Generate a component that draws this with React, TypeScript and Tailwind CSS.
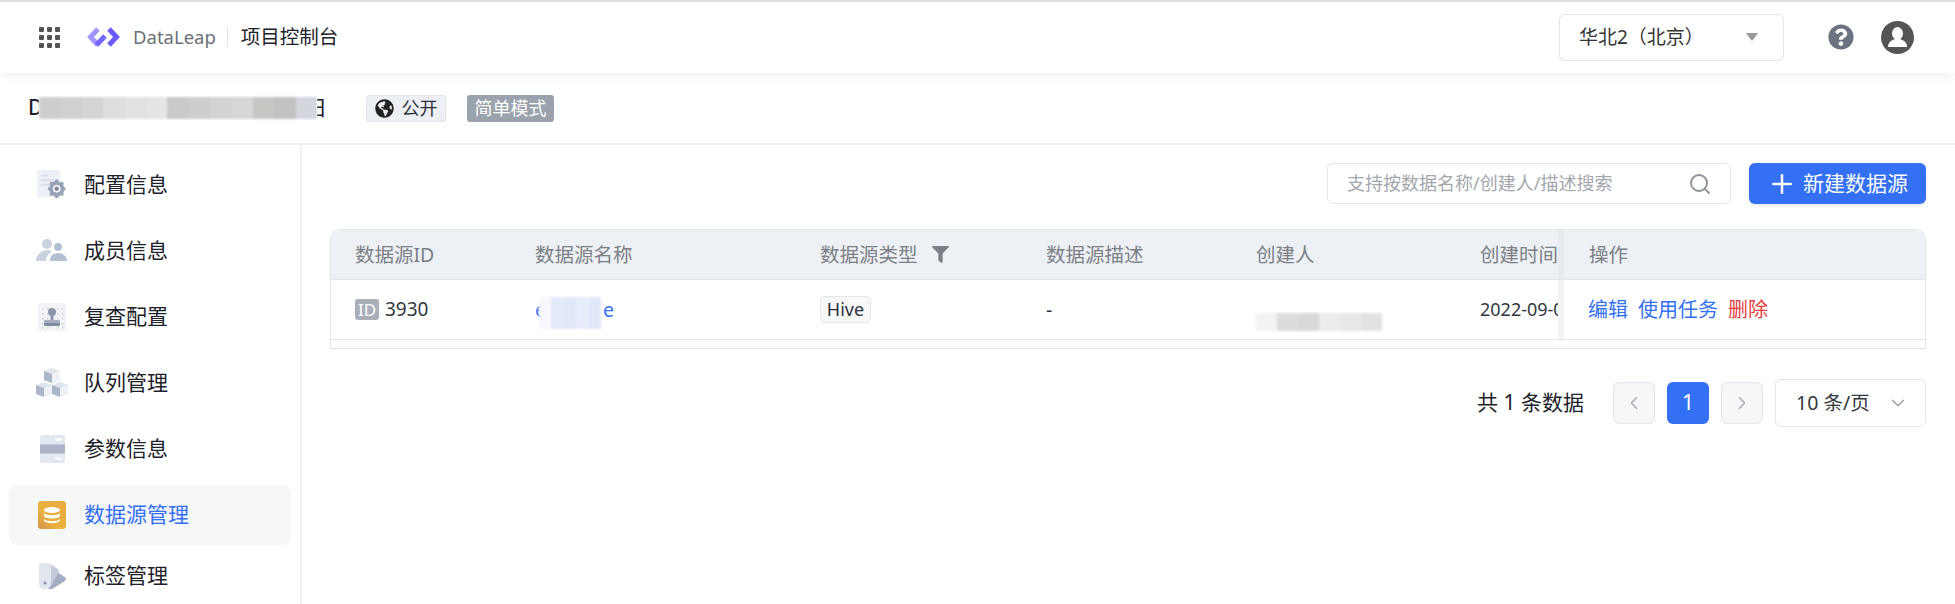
import type { ReactNode } from 'react'
import { ChevronDown, ChevronLeft, ChevronRight, Plus, Search } from 'lucide-react'
import { FaFilter, FaGlobeAmericas, FaQuestionCircle } from 'react-icons/fa'

const Logo = () => (
  <svg width="33" height="22" viewBox="0 0 33 22" fill="none" strokeWidth="5">
    <path d="M11 3 L3.5 11 L11 19" stroke="#a196ff" />
    <path d="M9.5 19 L18 10" stroke="#7466ff" />
    <path d="M22 3 L29.5 11 L22 19" stroke="#6a5bff" />
  </svg>
)

const GridDots = () => (
  <div className="grid w-[21px] grid-cols-3 gap-[3px]">
    {Array.from({ length: 9 }).map((_, i) => (
      <span key={i} className="h-[5px] w-[5px] rounded-[1px] bg-[#555]" />
    ))}
  </div>
)

const ConfigIcon = () => (
  <svg width="34" height="32" viewBox="0 0 34 32">
    <rect x="1" y="0" width="25" height="29" rx="2" fill="#edf0f6" />
    <rect x="5" y="5" width="8" height="2" fill="#d9dee8" />
    <rect x="5" y="10" width="14" height="2" fill="#d9dee8" />
    <rect x="5" y="15" width="10" height="2" fill="#d9dee8" />
    <circle cx="22" cy="20" r="8" fill="#98a3b7" />
    <circle cx="22" cy="12" r="2" fill="#98a3b7" />
    <circle cx="22" cy="28" r="2" fill="#98a3b7" />
    <circle cx="14.5" cy="20" r="2" fill="#98a3b7" />
    <circle cx="29.5" cy="20" r="2" fill="#98a3b7" />
    <circle cx="16.5" cy="14.5" r="2" fill="#98a3b7" />
    <circle cx="27.5" cy="14.5" r="2" fill="#98a3b7" />
    <circle cx="16.5" cy="25.5" r="2" fill="#98a3b7" />
    <circle cx="27.5" cy="25.5" r="2" fill="#98a3b7" />
    <circle cx="22" cy="20" r="4" fill="#fff" />
    <circle cx="22" cy="20" r="2.4" fill="#7d889c" />
  </svg>
)

const MemberIcon = () => (
  <svg width="32" height="24" viewBox="0 0 32 24">
    <circle cx="11" cy="5" r="5" fill="#c9d2df" />
    <path d="M0 22 C0 15 6 11 12 11 C14 11 15 12 16 13 C12 15 10 18 10 22 Z" fill="#c9d2df" />
    <circle cx="22" cy="8" r="4" fill="#b3c0d3" />
    <path d="M14 22 C14 16 18 14 22 14 C27 14 31 17 31 22 Z" fill="#b3c0d3" />
  </svg>
)

const ReviewIcon = () => (
  <svg width="28" height="28" viewBox="0 0 28 28">
    <rect width="28" height="28" rx="2" fill="#f2f4f8" />
    {[4, 9, 19, 24].map(x =>
      [5, 10, 15, 20, 24].map(y => <rect key={`${x}-${y}`} x={x} y={y} width="1.5" height="1.5" fill="#c5ccd9" />)
    )}
    <circle cx="14" cy="9" r="4" fill="#8a96aa" />
    <rect x="12.5" y="12" width="3" height="5" fill="#8a96aa" />
    <rect x="6" y="17" width="16" height="4" rx="1" fill="#a5afc0" />
    <rect x="6" y="20" width="16" height="3" rx="1" fill="#7f8ba0" />
  </svg>
)

const QueueIcon = () => (
  <svg width="32" height="30" viewBox="0 0 32 30">
    <path d="M16 0 L24 3 V12 L16 15 L8 12 V3 Z" fill="#dfe4ee" />
    <path d="M16 6 L24 3 V12 L16 15 Z" fill="#eef1f6" />
    <path d="M8 3 L16 6 V15 L8 12 Z" fill="#aab6c9" />
    <path d="M8 14 L16 17 V26 L8 29 L0 26 V17 Z" fill="#dfe4ee" />
    <path d="M0 17 L8 20 V29 L0 26 Z" fill="#aab6c9" />
    <path d="M8 20 L16 17 V26 L8 29 Z" fill="#eef1f6" />
    <path d="M24 14 L32 17 V26 L24 29 L16 26 V17 Z" fill="#dfe4ee" />
    <path d="M16 17 L24 20 V29 L16 26 Z" fill="#aab6c9" />
    <path d="M24 20 L32 17 V26 L24 29 Z" fill="#eef1f6" />
  </svg>
)

const ParamIcon = () => (
  <svg width="25" height="28" viewBox="0 0 25 28">
    <rect width="25" height="28" rx="2" fill="#e2e7f0" />
    <rect y="9.5" width="25" height="9" fill="#aab4c6" />
    <rect x="15" y="3.5" width="7" height="2" fill="#fff" />
    <rect x="15" y="22.5" width="7" height="2" fill="#fff" />
  </svg>
)

const DatabaseIcon = () => (
  <svg width="28" height="28" viewBox="0 0 28 28">
    <defs>
      <linearGradient id="db" x1="0" y1="1" x2="1" y2="0">
        <stop offset="0" stopColor="#d3924a" />
        <stop offset="0.4" stopColor="#ebb23e" />
        <stop offset="1" stopColor="#e8a93f" />
      </linearGradient>
    </defs>
    <rect width="28" height="28" rx="3" fill="url(#db)" />
    <ellipse cx="14" cy="9" rx="8" ry="3" fill="#fff" />
    <path d="M6 12 C8 15 20 15 22 12 V15.5 C20 18 8 18 6 15.5 Z" fill="#fff" />
    <path d="M6 18 C8 21 20 21 22 18 V19.5 C20 23 8 23 6 19.5 Z" fill="#fff" />
  </svg>
)

const TagIcon = () => (
  <svg width="27" height="26" viewBox="0 0 27 26">
    <path d="M11 4 L27 15 L26 18 L13 26 L9 26 Z" fill="#a3adc6" />
    <path d="M11 1 L19 6 L20 9 L11 24 Z" fill="#c3cadc" />
    <path d="M0 2 C0 1 1 0 2 0 H10 C11 0 12 1 12 2 V20 C12 24 10 26 6 26 C2 26 0 24 0 20 Z" fill="#e2e6ef" />
    <circle cx="6" cy="20" r="1.6" fill="#8f99ad" />
  </svg>
)

const Avatar = () => (
  <svg width="33" height="33" viewBox="0 0 33 33">
    <defs>
      <clipPath id="av">
        <circle cx="16.5" cy="16.5" r="16.5" />
      </clipPath>
    </defs>
    <circle cx="16.5" cy="16.5" r="16.5" fill="#555" />
    <g clipPath="url(#av)">
      <ellipse cx="16.5" cy="12.5" rx="5.5" ry="6.5" fill="#fff" />
      <path d="M7 26 C7 21 11 19 14 18 H19 C22 19 26 21 26 26 Z" fill="#fff" />
    </g>
  </svg>
)

const MENU: { label: string; icon: ReactNode; active?: boolean; className: string }[] = [
  { label: '配置信息', icon: <ConfigIcon />, className: 'mb-[6px]' },
  { label: '成员信息', icon: <MemberIcon />, className: 'mb-[6px]' },
  { label: '复查配置', icon: <ReviewIcon />, className: 'mb-[6px]' },
  { label: '队列管理', icon: <QueueIcon />, className: 'mb-[6px]' },
  { label: '参数信息', icon: <ParamIcon />, className: 'mb-[6px]' },
  { label: '数据源管理', icon: <DatabaseIcon />, active: true, className: 'mb-[1px]' },
  { label: '标签管理', icon: <TagIcon />, className: '' },
]

const Mosaic = ({ colors, className }: { colors: string[]; className: string }) => (
  <div className={`flex overflow-hidden blur-[1px] ${className}`}>
    {colors.map((c, i) => (
      <span key={i} className="h-full flex-1" style={{ backgroundColor: c }} />
    ))}
  </div>
)

const Header = () => (
  <header className="relative z-10 flex h-[73px] shrink-0 items-center border-t-2 border-[#dedede] bg-white pr-[41px] pb-[1px] pl-[39px] shadow-[0_3px_10px_rgba(0,0,0,0.06)]">
    <GridDots />
    <div className="ml-[27px]">
      <Logo />
    </div>
    <span className="ml-[13px] text-[18.5px] text-[#6b6f76]">DataLeap</span>
    <span className="ml-[11px] h-[20px] w-px bg-[#e2e2e2]" />
    <span className="ml-[13px] text-[19.5px] text-[#1d2129]">项目控制台</span>
    <div className="ml-auto flex h-[47px] w-[225px] items-center justify-between rounded-[6px] border border-[#e3e3e3] pr-[25px] pl-[19px] text-[19px] text-[#333]">
      <span>华北2（北京）</span>
      <span className="h-0 w-0 border-x-[6px] border-t-[8px] border-x-transparent border-t-[#999]" />
    </div>
    <FaQuestionCircle className="ml-[44px] text-[#6b7280]" size={26} />
    <div className="ml-[27px]">
      <Avatar />
    </div>
  </header>
)

const TitleBar = () => (
  <div className="flex h-[72px] shrink-0 items-center border-b-2 border-[#f0f1f3] pl-[28px]">
    <span className="w-[11px] overflow-hidden text-[21px] font-medium text-[#1d2129]">D</span>
    <Mosaic
      className="h-[22px] w-[278px]"
      colors={['#cfcdcb', '#d2d0ce', '#d5d4d2', '#dedede', '#e2e2e2', '#e4e4e4', '#cbcac8', '#cecdcb', '#d4d3d1', '#d8d7d6', '#c8c6c3', '#c4c2c0', '#d3d6dc']}
    />
    <span className="w-[10px] overflow-hidden text-[21px] text-[#1d2129] [direction:rtl]">日</span>
    <div className="ml-[39px] flex h-[27px] w-[80px] items-center justify-center gap-[8px] rounded-[3px] border border-[#dfe3ea] bg-[#eceff4] text-[18px] text-[#2b2f36]">
      <FaGlobeAmericas size={19} className="text-[#222]" />
      <span>公开</span>
    </div>
    <div className="ml-[21px] flex h-[27px] w-[87px] items-center justify-center rounded-[3px] bg-[#9aa2ad] text-[18px] text-white">
      简单模式
    </div>
  </div>
)

const Sidebar = () => (
  <aside className="w-[302px] shrink-0 border-r-2 border-[#f0f1f3] px-[9px] pt-[10px]">
    {MENU.map(item => (
      <div
        key={item.label}
        className={`flex h-[60px] items-center rounded-[8px] pl-[27px] ${item.className} ${item.active ? 'bg-[#f6f7f9] text-[#3370f4]' : 'text-[#1d2129]'}`}
      >
        <span className="flex w-[32px] justify-center">{item.icon}</span>
        <span className="ml-[16px] text-[21px]">{item.label}</span>
      </div>
    ))}
  </aside>
)

const Toolbar = () => (
  <div className="flex justify-end gap-[18px]">
    <div className="flex h-[41px] w-[404px] items-center justify-between rounded-[6px] border border-[#e3e5ea] pr-[18px] pl-[19px]">
      <span className="text-[18px] text-[#a3a6ad]">支持按数据名称/创建人/描述搜索</span>
      <Search size={24} strokeWidth={2} className="text-[#8f939a]" />
    </div>
    <button className="flex h-[41px] w-[177px] items-center justify-center gap-[6px] rounded-[6px] bg-[#3370f4] text-[21px] text-white shadow-[0_2px_3px_rgba(0,0,0,0.08)]">
      <Plus size={30} strokeWidth={2} />
      <span>新建数据源</span>
    </button>
  </div>
)

const TH = 'flex h-full shrink-0 items-center text-[19.5px] text-[#7b7f86]'
const TD = 'flex h-full shrink-0 items-center text-[#333840]'

const DataTable = () => (
  <div className="mt-[25px] h-[120px] overflow-hidden rounded-t-[10px] border border-[#e3e5ea] bg-white">
    <div className="flex h-[50px] border-b border-[#e3e5ea] bg-[#edf0f5]">
      <div className="flex min-w-0 flex-1 overflow-hidden pl-[24px]">
        <div className={`${TH} w-[180px]`}>数据源ID</div>
        <div className={`${TH} w-[285px]`}>数据源名称</div>
        <div className={`${TH} w-[226px]`}>
          数据源类型
          <FaFilter size={17} className="ml-[14px] text-[#7b8088]" />
        </div>
        <div className={`${TH} w-[210px]`}>数据源描述</div>
        <div className={`${TH} w-[224px]`}>创建人</div>
        <div className={`${TH} w-[78px]`}>创建时间</div>
      </div>
      <div className={`${TH} w-[367px] border-l-[6px] border-[#e7eaef] pl-[25px]`}>操作</div>
    </div>
    <div className="flex h-[60px] border-b border-[#e3e5ea]">
      <div className="flex min-w-0 flex-1 overflow-hidden pl-[24px]">
        <div className={`${TD} w-[180px] text-[19px]`}>
          <span className="flex h-[21px] w-[24px] items-center justify-center rounded-[3px] bg-[#a9aeb9] text-[17px] text-white">ID</span>
          <span className="ml-[6px]">3930</span>
        </div>
        <div className={`${TD} relative w-[285px] text-[19.5px]`}>
          <span className="text-[#3370f4]">e</span>
          <Mosaic className="absolute top-[17px] left-[4px] h-[32px] w-[62px]" colors={['#f7f8fd', '#e4eafa', '#e2e8fa', '#e8edfb', '#e2e8fa']} />
          <span className="ml-[57px] text-[#3370f4]">e</span>
        </div>
        <div className={`${TD} w-[226px]`}>
          <span className="flex h-[27px] w-[51px] items-center justify-center rounded-[5px] border border-[#e3e5ea] bg-[#f7f8fa] text-[18px] text-[#2b2f36]">Hive</span>
        </div>
        <div className={`${TD} w-[210px] text-[19.5px]`}>-</div>
        <div className={`${TD} relative w-[224px]`}>
          <Mosaic className="absolute top-[33px] left-0 h-[18px] w-[126px]" colors={['#f3f3f3', '#dcdcdc', '#d9d9d9', '#ececec', '#e8e8e8', '#e2e2e2']} />
        </div>
        <div className={`${TD} w-[78px] overflow-hidden text-[18px] whitespace-nowrap`}>2022-09-06 11:20</div>
      </div>
      <div className={`${TD} w-[367px] gap-[10px] border-l-[6px] border-[#f1f3f5] pl-[24px] text-[20px]`}>
        <span className="text-[#3370f4]">编辑</span>
        <span className="text-[#3370f4]">使用任务</span>
        <span className="text-[#e5413b]">删除</span>
      </div>
    </div>
  </div>
)

const Pagination = () => (
  <div className="mt-[30px] flex items-center justify-end text-[#1d2129]">
    <span className="mr-[29px] text-[21px]">共 1 条数据</span>
    <div className="flex h-[42px] w-[42px] items-center justify-center rounded-[6px] border border-[#e3e5ea] bg-[#f6f7f9] text-[#a5a9b0]">
      <ChevronLeft size={22} strokeWidth={1.5} />
    </div>
    <div className="ml-[12px] flex h-[42px] w-[42px] items-center justify-center rounded-[6px] bg-[#3370f4] text-[21px] text-white">1</div>
    <div className="ml-[12px] flex h-[42px] w-[42px] items-center justify-center rounded-[6px] border border-[#e3e5ea] bg-[#f6f7f9] text-[#a5a9b0]">
      <ChevronRight size={22} strokeWidth={1.5} />
    </div>
    <div className="ml-[12px] flex h-[48px] w-[151px] items-center justify-between rounded-[6px] border border-[#e3e5ea] pr-[16px] pl-[20px] text-[19.5px] text-[#333840]">
      <span>10 条/页</span>
      <ChevronDown size={22} strokeWidth={1.5} className="text-[#989ca3]" />
    </div>
  </div>
)

export default function App() {
  return (
    <div className="flex h-[604px] w-[1955px] flex-col overflow-hidden bg-white font-['Noto_Sans','Noto_Sans_CJK_SC',sans-serif]">
      <Header />
      <TitleBar />
      <div className="flex min-h-0 flex-1">
        <Sidebar />
        <main className="min-w-0 flex-1 pt-[18px] pr-[29px] pl-[28px]">
          <Toolbar />
          <DataTable />
          <Pagination />
        </main>
      </div>
    </div>
  )
}
